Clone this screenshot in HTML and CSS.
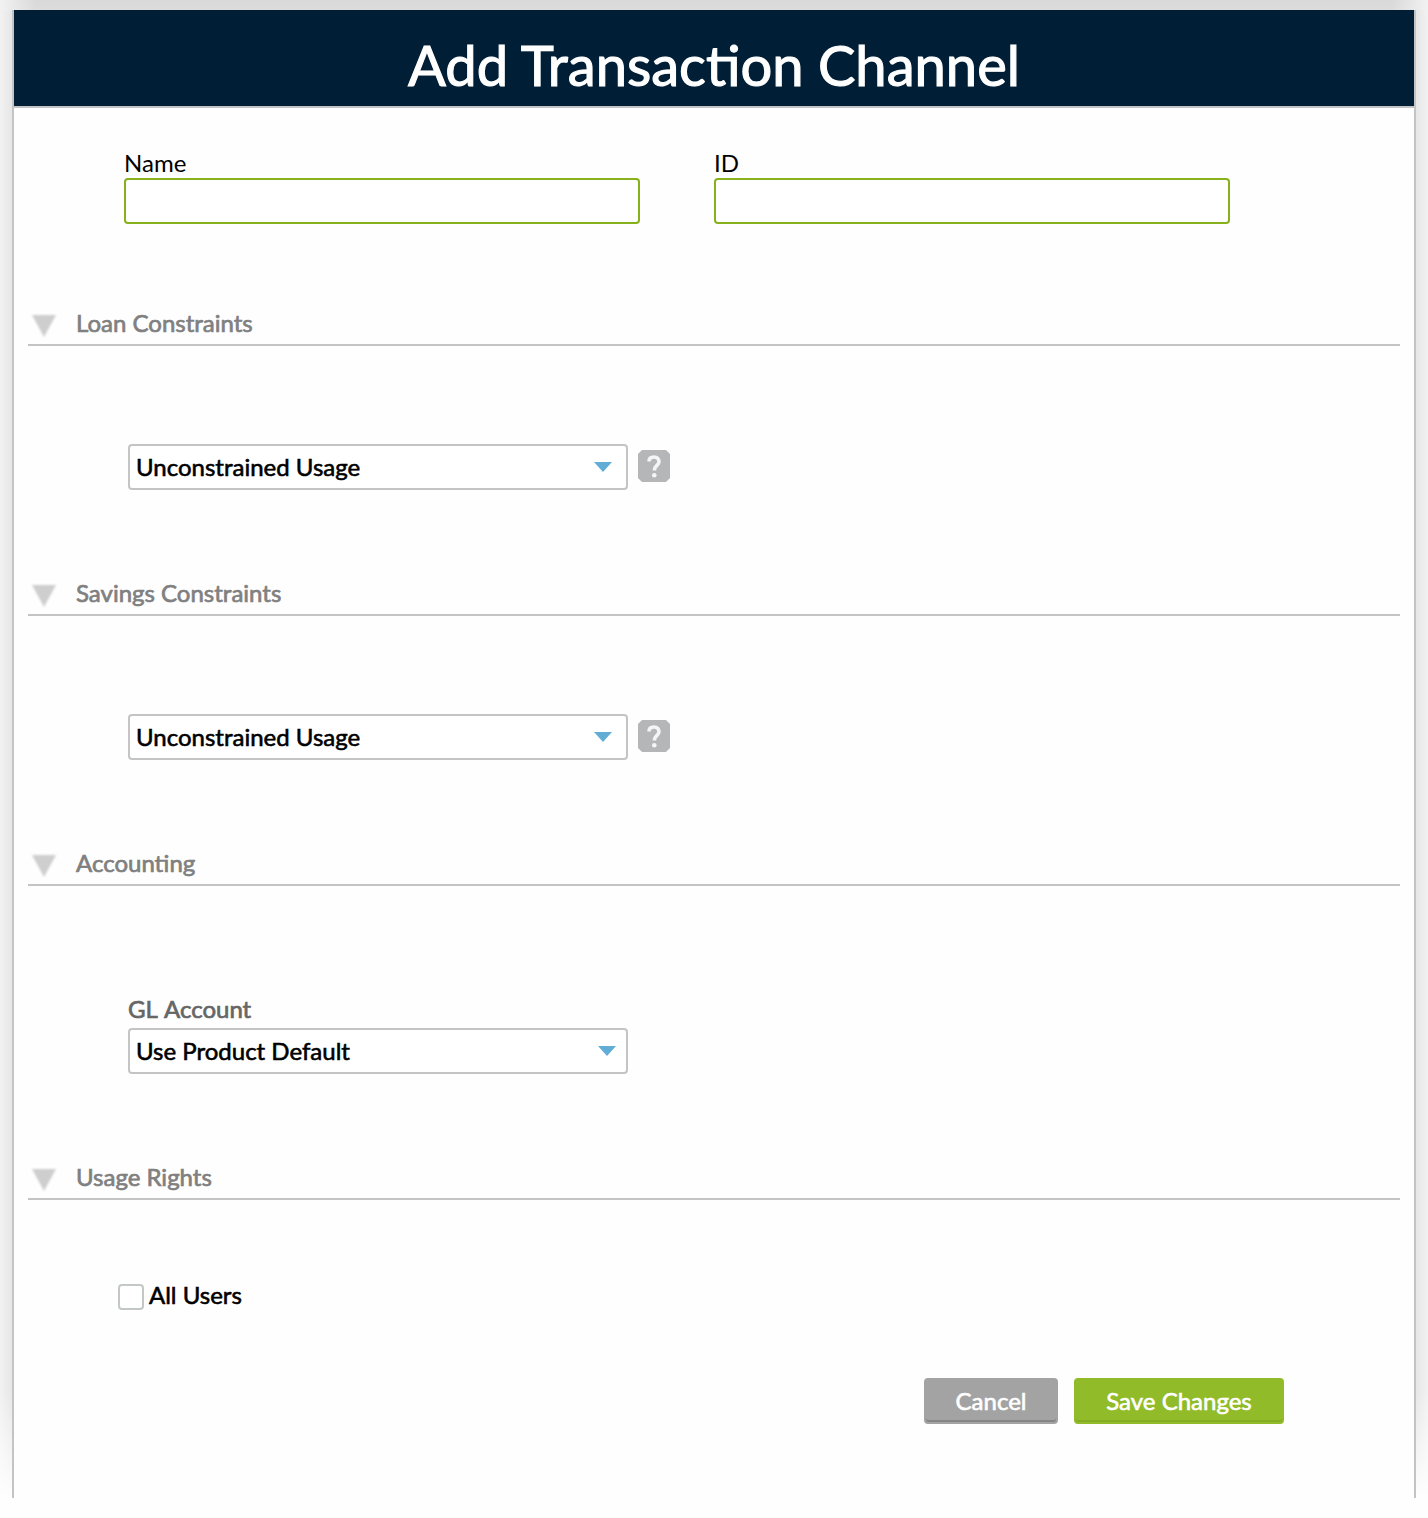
FILE: index.html
```html
<!DOCTYPE html>
<html lang="en">
<head>
<meta charset="utf-8">
<title>Add Transaction Channel</title>
<link rel="stylesheet" href="styles.css">
</head>
<body>
<main class="dialog">
  <header class="dialog-header"><h1>Add Transaction Channel</h1></header>
  <form class="dialog-body">
    <div class="identity">
      <label class="field"><span>Name</span><input type="text"></label>
      <label class="field"><span>ID</span><input type="text"></label>
    </div>
    <section class="section loan">
      <h2><svg class="toggle" viewBox="0 0 24 22"><path d="M0 0H24L12 22Z"/></svg><span>Loan Constraints</span></h2>
      <div class="row">
        <div class="select inset"><span>Unconstrained Usage</span><svg class="arrow" viewBox="0 0 18 10"><path d="M0 0H18L9 10Z"/></svg></div>
        <svg class="help" viewBox="0 0 32 32"><path class="tile" d="M4 0H28L32 4V28L28 32H4L0 28V4Z"/><g class="mark"><path d="M11 11.5C11 8.5 13 7 16 7S21 8.8 21 11.8C21 15.5 16.3 15.5 16.3 20.5"/><circle cx="16.3" cy="25.2" r="2.3"/></g></svg>
      </div>
    </section>
    <section class="section savings">
      <h2><svg class="toggle" viewBox="0 0 24 22"><path d="M0 0H24L12 22Z"/></svg><span>Savings Constraints</span></h2>
      <div class="row">
        <div class="select inset"><span>Unconstrained Usage</span><svg class="arrow" viewBox="0 0 18 10"><path d="M0 0H18L9 10Z"/></svg></div>
        <svg class="help" viewBox="0 0 32 32"><path class="tile" d="M4 0H28L32 4V28L28 32H4L0 28V4Z"/><g class="mark"><path d="M11 11.5C11 8.5 13 7 16 7S21 8.8 21 11.8C21 15.5 16.3 15.5 16.3 20.5"/><circle cx="16.3" cy="25.2" r="2.3"/></g></svg>
      </div>
    </section>
    <section class="section accounting">
      <h2><svg class="toggle" viewBox="0 0 24 22"><path d="M0 0H24L12 22Z"/></svg><span>Accounting</span></h2>
      <div class="account">
        <div class="account-label">GL Account</div>
        <div class="select"><span>Use Product Default</span><svg class="arrow" viewBox="0 0 18 10"><path d="M0 0H18L9 10Z"/></svg></div>
      </div>
    </section>
    <section class="section rights">
      <h2><svg class="toggle" viewBox="0 0 24 22"><path d="M0 0H24L12 22Z"/></svg><span>Usage Rights</span></h2>
      <label class="check"><input type="checkbox"><span>All Users</span></label>
    </section>
    <div class="actions">
      <button type="button" class="button cancel">Cancel</button>
      <button type="button" class="button save">Save Changes</button>
    </div>
  </form>
</main>
</body>
</html>
```
FILE: styles.css
```css
* { box-sizing: border-box; }
body {
  margin: 0;
  height: 1518px;
  padding: 10px 12px 20px;
  overflow: hidden;
  font: 24px/30px Lato, "Liberation Sans", sans-serif;
  color: #000;
  background:
    linear-gradient(90deg, #f2f2f2 0, rgba(242,242,242,0) 36px, rgba(242,242,242,0) calc(100% - 36px), #f2f2f2 100%) 0 0 / 100% 10px no-repeat,
    linear-gradient(#d9d9d9, #dcdcdc) 0 0 / 100% 10px no-repeat,
    linear-gradient(rgba(254,254,254,0) 1390px, #fefefe 1498px),
    linear-gradient(90deg, #f2f2f2 0, #e6e6e6 12px, #e6e6e6 1416px, #f2f2f2 1428px);
}
.dialog {
  height: 1488px;
  border: solid #c4c4c4;
  border-width: 0 2px;
  background: #fefefe;
}
.dialog-header {
  height: 98px;
  border-bottom: 2px solid #c4c4c4;
  background: #001e35;
  text-align: center;
}
h1 {
  margin: 0;
  padding-top: 19px;
  color: #fff;
  font-size: 56.1px;
  font-weight: 400;
  line-height: 71px;
  -webkit-text-stroke: 1.1px #fff;
}
.identity {
  display: flex;
  gap: 74px;
  height: 190px;
  padding: 40px 0 0 110px;
}
.field { display: block; width: 516px; }
.field span { display: block; height: 30px; }
.field input {
  display: block;
  width: 516px;
  height: 46px;
  border: 2px solid #86b11a;
  border-radius: 4px;
  background: #fff;
}
.section { padding: 0 14px; }
.loan, .savings { height: 270px; }
.accounting { height: 314px; }
.rights { height: 226px; }
h2 {
  display: flex;
  height: 48px;
  margin: 0;
  padding: 10px 0 0 4px;
  border-bottom: 2px solid #c4c4c4;
  color: #808080;
  font-size: 24px;
  font-weight: 400;
  line-height: 30px;
  -webkit-text-stroke: 0.7px #808080;
}
.toggle {
  width: 24px;
  height: 22px;
  margin: 7px 20px 0 0;
  fill: #cecece;
  filter: blur(0.8px);
}
.row {
  display: flex;
  align-items: flex-start;
  gap: 10px;
  padding: 98px 0 0 100px;
}
.select {
  display: flex;
  justify-content: space-between;
  width: 500px;
  height: 46px;
  padding: 0 10px 0 6px;
  border: 2px solid #c4c4c4;
  border-radius: 4px;
  background: #fff;
  line-height: 41px;
  -webkit-text-stroke: 0.6px #000;
}
.inset { padding-right: 14px; }
.arrow {
  width: 18px;
  height: 10px;
  margin-top: 16px;
  fill: #62add5;
  stroke: none;
}
.help { width: 32px; height: 32px; margin-top: 6px; }
.tile { fill: #b5b6b7; }
.mark { filter: blur(0.5px); }
.mark path { fill: none; stroke: #f5f5f5; stroke-width: 3.6; }
.mark circle { fill: #f5f5f5; }
.account { padding: 108px 0 0 100px; }
.account-label {
  height: 34px;
  color: #666;
  line-height: 30px;
  word-spacing: 1.5px;
  -webkit-text-stroke: 0.7px #666;
}
.check {
  display: flex;
  gap: 5px;
  padding: 84px 0 0 90px;
  -webkit-text-stroke: 0.6px #000;
}
.check input {
  appearance: none;
  width: 26px;
  height: 26px;
  margin: 0;
  border: 2px solid #c3c7c7;
  border-radius: 4px;
  background: #fff;
}
.check span { margin-top: -4px; }
.actions {
  display: flex;
  justify-content: flex-end;
  gap: 16px;
  padding-right: 130px;
}
.button {
  height: 46px;
  padding: 0;
  border: 2px solid;
  border-radius: 4px;
  color: #fff;
  font: 24px/40px Lato, "Liberation Sans", sans-serif;
  -webkit-text-stroke: 0.6px #fff;
}
.cancel { width: 134px; border-color: #a3a3a3; background: #a3a3a3; box-shadow: inset 0 -2px #858585; }
.save { width: 210px; border-color: #91bb29; background: #91bb29; box-shadow: inset 0 -2px #84ac24; }
```
